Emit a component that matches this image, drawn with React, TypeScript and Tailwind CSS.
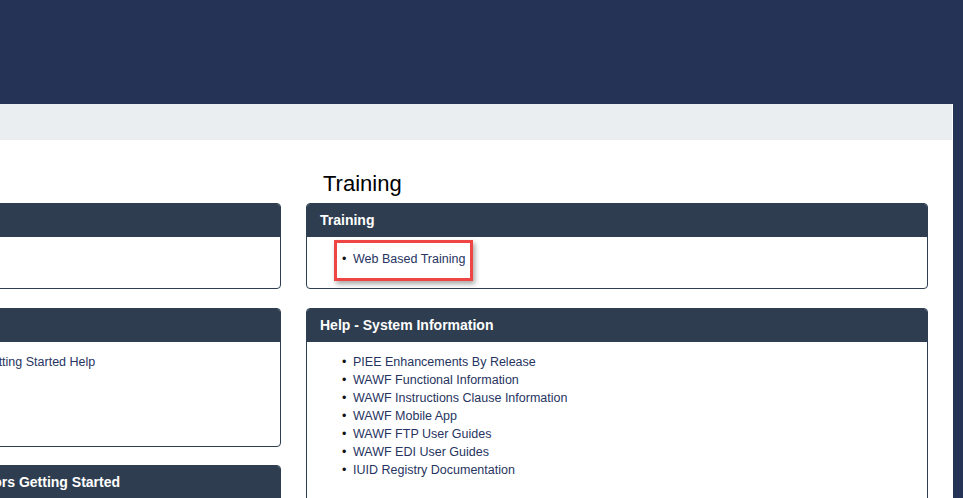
import type { ReactNode } from "react";

const helpLinks = [
  "PIEE Enhancements By Release",
  "WAWF Functional Information",
  "WAWF Instructions Clause Information",
  "WAWF Mobile App",
  "WAWF FTP User Guides",
  "WAWF EDI User Guides",
  "IUID Registry Documentation",
];

function Panel({
  title,
  bodyClass,
  children,
}: {
  title: string;
  bodyClass?: string;
  children?: ReactNode;
}) {
  return (
    <div className="border border-[#2e3e50] rounded-[4px] overflow-hidden bg-white">
      <div className="h-[33px] bg-[#2e3e50] text-white font-bold text-[14px] leading-[32px] pl-[13px] whitespace-nowrap">
        {title}
      </div>
      <div className={bodyClass}>{children}</div>
    </div>
  );
}

function LinkItem({ label, boxed }: { label: string; boxed?: boolean }) {
  return (
    <li className="relative flex h-[18px] items-center text-[12.5px] leading-[18px] whitespace-nowrap">
      <span className="w-[11px] text-[#111]">•</span>
      <a href="#" className="text-[#27345f]">
        {label}
      </a>
      {boxed && (
        <span className="absolute left-[-8px] top-[-10px] w-[139px] h-[41px] border-[3px] border-[#f04545] shadow-[2px_3px_5px_rgba(0,0,0,0.35)]" />
      )}
    </li>
  );
}

export default function App() {
  return (
    <div className="w-[963px] h-[498px] overflow-hidden bg-[#243356] font-['Liberation_Sans',Arial,sans-serif]">
      <div className="h-[104px]" />
      <div className="w-[953px] h-[394px] bg-white overflow-hidden">
        <div className="h-[36px] w-[952px] bg-[#eaeef0]" />

        <div className="flex gap-[25px]">
          {/* left column, cut off by the window */}
          <div className="w-[281px] overflow-hidden flex justify-end shrink-0">
            <div className="w-[378px] shrink-0">
              <div className="h-[63px] pt-[31px] pl-[17px] text-[22px] leading-[26px] text-black">
                Help
              </div>
              <Panel title="Help" bodyClass="h-[51px] pt-[13px] pl-[35px]">
                <ul>
                  <LinkItem label="Login" />
                </ul>
              </Panel>
              <div className="h-[19px]" />
              <Panel title="Help" bodyClass="h-[104px] pt-[11px] pl-[35px]">
                <ul>
                  <LinkItem label="PIEE Getting Started Help" />
                </ul>
              </Panel>
              <div className="h-[18px]" />
              <Panel title="Help - Vendors Getting Started" bodyClass="h-[60px]" />
            </div>
          </div>

          {/* right column */}
          <div className="w-[622px] shrink-0">
            <h1 className="h-[63px] pt-[31px] pl-[17px] text-[22px] leading-[26px] font-normal text-black">
              Training
            </h1>
            <Panel title="Training" bodyClass="h-[51px] pt-[13px] pl-[35px]">
              <ul>
                <LinkItem label="Web Based Training" boxed />
              </ul>
            </Panel>
            <div className="h-[19px]" />
            <Panel
              title="Help - System Information"
              bodyClass="h-[190px] pt-[11px] pl-[35px]"
            >
              <ul>
                {helpLinks.map((l) => (
                  <LinkItem key={l} label={l} />
                ))}
              </ul>
            </Panel>
          </div>
        </div>
      </div>
    </div>
  );
}
